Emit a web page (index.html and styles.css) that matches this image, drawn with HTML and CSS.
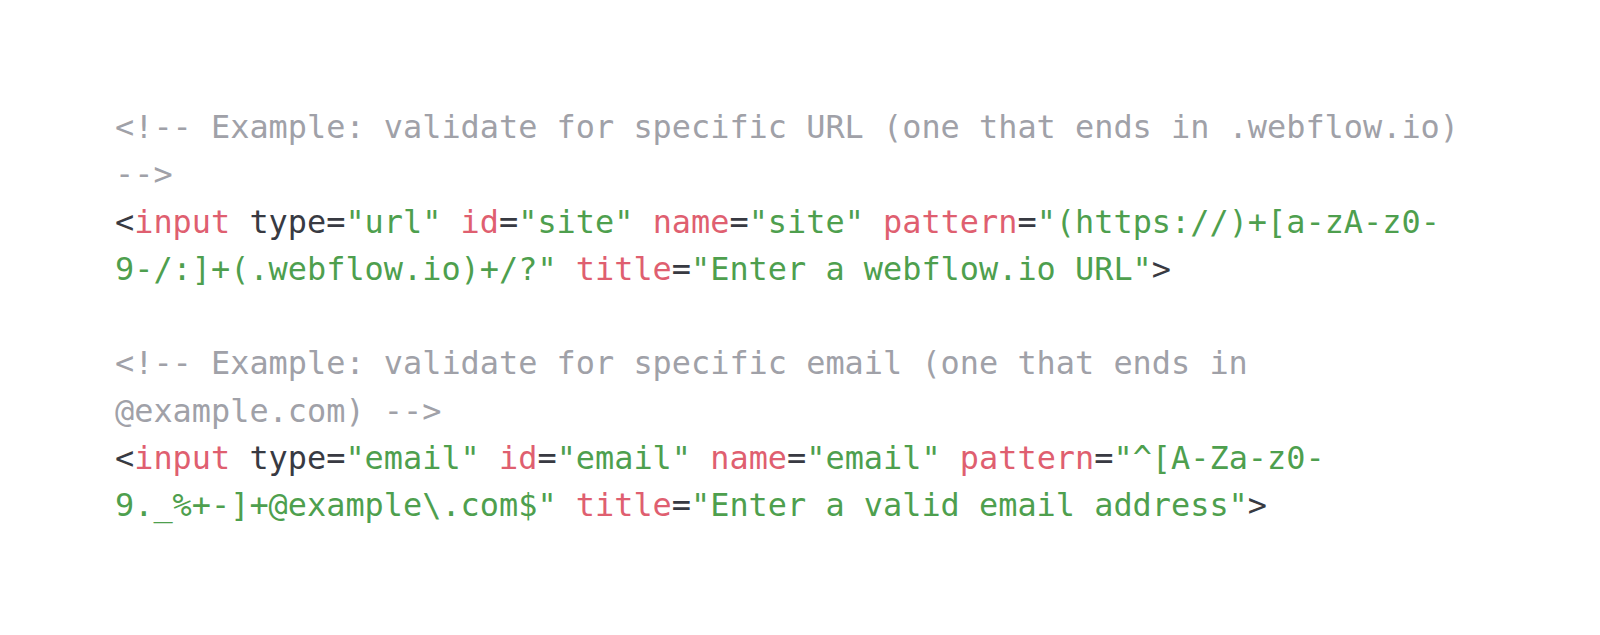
FILE: index.html
```html
<!DOCTYPE html>
<html lang="en">
<head>
<meta charset="utf-8">
<title>Pattern validation examples</title>
<link rel="stylesheet" href="styles.css">
</head>
<body>
<main class="page">
<pre class="code"><code><span class="cm">&lt;!-- Example: validate for specific URL (one that ends in .webflow.io)</span>
<span class="cm">--&gt;</span>
<span class="pn">&lt;</span><span class="tg">input</span> <span class="pn">type=</span><span class="st">"url"</span> <span class="at">id</span><span class="pn">=</span><span class="st">"site"</span> <span class="at">name</span><span class="pn">=</span><span class="st">"site"</span> <span class="at">pattern</span><span class="pn">=</span><span class="st">"(https://)+[a-zA-z0-</span>
<span class="st">9-/:]+(.webflow.io)+/?"</span> <span class="at">title</span><span class="pn">=</span><span class="st">"Enter a webflow.io URL"</span><span class="pn">&gt;</span>

<span class="cm">&lt;!-- Example: validate for specific email (one that ends in</span>
<span class="cm">@example.com) --&gt;</span>
<span class="pn">&lt;</span><span class="tg">input</span> <span class="pn">type=</span><span class="st">"email"</span> <span class="at">id</span><span class="pn">=</span><span class="st">"email"</span> <span class="at">name</span><span class="pn">=</span><span class="st">"email"</span> <span class="at">pattern</span><span class="pn">=</span><span class="st">"^[A-Za-z0-</span>
<span class="st">9._%+-]+@example\.com$"</span> <span class="at">title</span><span class="pn">=</span><span class="st">"Enter a valid email address"</span><span class="pn">&gt;</span></code></pre>
</main>
</body>
</html>
```

FILE: styles.css
```css
html, body {
  margin: 0;
  padding: 0;
  background: #ffffff;
}

.page {
  padding: 104px 0 0 115px;
}

.code {
  margin: 0;
  font-family: "DejaVu Sans Mono", "Liberation Mono", monospace;
  font-size: 31.9px;
  line-height: 47.3px;
  color: #383a42;
  white-space: pre;
}

.code code {
  font-family: inherit;
}

.cm { color: #a0a1a8; }
.pn { color: #383a42; }
.tg { color: #df5f70; }
.at { color: #df5f70; }
.st { color: #4e9f4e; }
```
